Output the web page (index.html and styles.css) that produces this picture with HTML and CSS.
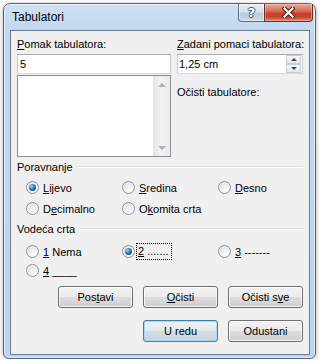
FILE: index.html
```html
<!DOCTYPE html>
<html>
<head>
<meta charset="utf-8">
<link rel="stylesheet" href="styles.css">
</head>
<body>
<div class="window">
  <div class="titlebar">
    <span class="title">Tabulatori</span>
    <div class="caption">
      <div class="cbtn help"><span class="q">?</span></div>
      <div class="cbtn close">
        <svg width="13" height="11" viewBox="0 0 13 11">
          <path d="M2.5 1.5 L10.5 9.5 M10.5 1.5 L2.5 9.5" stroke="#4a1810" stroke-width="4.2" stroke-linecap="square" fill="none"/>
          <path d="M2.5 1.5 L10.5 9.5 M10.5 1.5 L2.5 9.5" stroke="#ffffff" stroke-width="2.2" stroke-linecap="square" fill="none"/>
        </svg>
      </div>
    </div>
  </div>
  <div class="panel">
    <div class="top">
      <div class="col">
        <div class="label"><u>P</u>omak tabulatora:</div>
        <div class="textbox">5</div>
        <div class="listbox">
          <div class="scrollbar">
            <span class="arrow up"></span>
            <span class="arrow down"></span>
          </div>
        </div>
      </div>
      <div class="col">
        <div class="label"><u>Z</u>adani pomaci tabulatora:</div>
        <div class="spin">
          <span class="spin-text">1,25 cm</span>
          <div class="spinbtns">
            <div class="sbtn"><span class="sarrow up"></span></div>
            <div class="sbtn"><span class="sarrow down"></span></div>
          </div>
        </div>
        <div class="label clear">Očisti tabulatore:</div>
      </div>
    </div>

    <div class="group-header g1">Poravnanje</div>
    <div class="radios r1">
      <div class="opt"><span class="radio checked"></span><span><u>L</u>ijevo</span></div>
      <div class="opt"><span class="radio"></span><span><u>S</u>redina</span></div>
      <div class="opt"><span class="radio"></span><span><u>D</u>esno</span></div>
      <div class="opt"><span class="radio"></span><span>D<u>e</u>cimalno</span></div>
      <div class="opt"><span class="radio"></span><span>O<u>k</u>omita crta</span></div>
    </div>

    <div class="group-header g2">Vodeća crta</div>
    <div class="radios r2">
      <div class="opt"><span class="radio"></span><span><u>1</u> Nema</span></div>
      <div class="opt"><span class="radio checked"></span><span class="focus"><u>2</u> .......</span></div>
      <div class="opt"><span class="radio"></span><span><u>3</u> -------</span></div>
      <div class="opt"><span class="radio"></span><span><u>4</u> ____</span></div>
    </div>

    <div class="btnrow row1">
      <div class="btn">Pos<u>t</u>avi</div>
      <div class="btn"><u>O</u>čisti</div>
      <div class="btn">Očisti s<u>v</u>e</div>
    </div>
    <div class="btnrow row2">
      <div class="btn default">U redu</div>
      <div class="btn">Odustani</div>
    </div>
  </div>
</div>
</body>
</html>
```

FILE: styles.css
```css
* { box-sizing: border-box; }

body {
  margin: 0;
  background: #ffffff;
  font-family: "Liberation Sans", Arial, sans-serif;
  font-size: 11px;
  color: #000;
}

u { text-decoration: underline; text-underline-offset: 1px; }

.window {
  margin: 3px 0 0 3px;
  width: 313px;
  height: 356px;
  border: 1px solid #56647a;
  border-radius: 7px 7px 6px 6px;
  background: linear-gradient(180deg, #cfe2f5 0px, #c0d8f0 26px, #bcd5ee 100%);
  padding: 0 5px 3px 6px;
  display: flex;
  flex-direction: column;
  box-shadow: 0 1px 4px rgba(0,0,0,0.35), inset 0 0 0 1px rgba(255,255,255,0.55);
}

.titlebar {
  height: 26px;
  display: flex;
  align-items: flex-start;
  flex: none;
}

.title {
  margin-top: 6px;
  margin-left: 2px;
  font-size: 12px;
  line-height: 14px;
  color: #000;
}

.caption {
  margin-left: auto;
  margin-right: -3px;
  display: flex;
}

.cbtn {
  height: 18px;
  border: 1px solid #5d6b7e;
  border-top: none;
  display: flex;
  align-items: center;
  justify-content: center;
}

.help {
  width: 27px;
  border-radius: 0 0 0 4px;
  background: linear-gradient(180deg, #e6eef7 0%, #d3e0ee 45%, #b9cbe0 55%, #c9d9ea 100%);
  box-shadow: inset 0 0 0 1px rgba(255,255,255,0.5);
}

.q {
  font-family: "DejaVu Sans", sans-serif;
  font-weight: bold;
  font-size: 13px;
  line-height: 14px;
  color: #ffffff;
  text-shadow: 1px 0 0 #4c5560, -1px 0 0 #4c5560, 0 1px 0 #4c5560, 0 -1px 0 #4c5560;
}

.close {
  width: 49px;
  margin-left: -1px;
  border-color: #6b2b22;
  border-radius: 0 0 4px 0;
  background: linear-gradient(180deg, #e9a99c 0%, #d9705d 40%, #c7412f 55%, #c9432f 75%, #e0846c 100%);
  box-shadow: inset 0 0 0 1px rgba(255,210,200,0.45);
}

.panel {
  width: 300px;
  height: 325px;
  background: #f0f0f0;
  border: 1px solid #6d7c90;
  padding: 7px 6px 0 6px;
  flex: none;
}

.top {
  display: grid;
  grid-template-columns: 154px 126px;
  column-gap: 6px;
}

.label {
  height: 13px;
  line-height: 13px;
  white-space: nowrap;
}

.textbox {
  margin-top: 3px;
  height: 20px;
  border: 1px solid;
  border-color: #abadb3 #c9ccd2 #d6dae0 #c9ccd2;
  background: #fff;
  padding-left: 2px;
  line-height: 18px;
}

.listbox {
  margin-top: 1px;
  height: 82px;
  border: 1px solid #8a8f97;
  background: #fff;
  display: flex;
  justify-content: flex-end;
}

.scrollbar {
  width: 17px;
  height: 100%;
  background: linear-gradient(90deg, #e6e6e6 0%, #f1f1f1 40%, #ececec 100%);
  border-left: 1px solid #e4e4e4;
  display: flex;
  flex-direction: column;
  justify-content: space-between;
  align-items: center;
  padding: 7px 0 6px 0;
}

.arrow {
  width: 0;
  height: 0;
  border-left: 4px solid transparent;
  border-right: 4px solid transparent;
}
.arrow.up { border-bottom: 4px solid #b0b0b0; }
.arrow.down { border-top: 4px solid #b0b0b0; }

.spin {
  margin-top: 3px;
  height: 20px;
  border: 1px solid;
  border-color: #abadb3 #c9ccd2 #d6dae0 #c9ccd2;
  background: #fff;
  display: flex;
}

.spin-text {
  flex: 1;
  padding-left: 1px;
  line-height: 18px;
}

.spinbtns {
  width: 15px;
  margin: 0 1px 0 0;
  display: flex;
  flex-direction: column;
}

.sbtn {
  height: 9px;
  border: 1px solid #c6ccd4;
  background: linear-gradient(180deg, #f6f7f9 0%, #e5e8ec 100%);
  display: flex;
  align-items: center;
  justify-content: center;
}

.sarrow {
  width: 0;
  height: 0;
  border-left: 3px solid transparent;
  border-right: 3px solid transparent;
}
.sarrow.up { border-bottom: 3px solid #444; }
.sarrow.down { border-top: 3px solid #444; }

.label.clear { margin-top: 12px; }

.group-header {
  display: flex;
  align-items: center;
  gap: 5px;
  height: 13px;
  line-height: 13px;
  white-space: nowrap;
}
.group-header::after {
  content: "";
  flex: 1;
  height: 1px;
  margin-top: -2px;
  background: #d5dde3;
  box-shadow: 0 1px 0 #ffffff;
}
.g1 { margin-top: 4px; }
.g2 { margin-top: 4px; }

.radios {
  display: grid;
  grid-template-columns: 96px 96px 94px;
  padding-left: 9px;
}
.r1 { margin-top: 3px; grid-auto-rows: 21px; }
.r2 { margin-top: 6px; grid-auto-rows: 19px; }

.opt {
  display: flex;
  align-items: center;
  gap: 4px;
  white-space: nowrap;
}

.radio {
  width: 13px;
  height: 13px;
  flex: none;
  border-radius: 50%;
  border: 1px solid #8e9094;
  background: radial-gradient(circle at 65% 70%, #fdfdfd 0%, #f0f0f0 40%, #d2d2d2 100%);
  box-shadow: inset 0 0 0 1px rgba(255,255,255,0.6);
  display: flex;
  align-items: center;
  justify-content: center;
}

.radio.checked::after {
  content: "";
  width: 7px;
  height: 7px;
  border-radius: 50%;
  background: radial-gradient(circle at 35% 35%, #8fe0ff 0%, #3a8fc8 35%, #0f4f87 75%, #0c3f6e 100%);
}

.focus {
  outline: 1px dotted #000;
  outline-offset: 0;
  padding: 1px 2px 1px 1px;
  margin-left: -2px;
  line-height: 13px;
}

.btnrow {
  display: flex;
  justify-content: flex-end;
  gap: 10px;
}
.row1 { margin-top: 6px; }
.row2 { margin-top: 12px; }

.btn {
  width: 75px;
  height: 22px;
  border: 1px solid #707070;
  border-radius: 3px;
  background: linear-gradient(180deg, #f2f2f2 0%, #ebebeb 48%, #dddddd 52%, #cfcfcf 100%);
  box-shadow: inset 0 0 0 1px rgba(255,255,255,0.7);
  text-align: center;
  line-height: 20px;
  white-space: nowrap;
}

.btn.default {
  border-color: #3c7fb1;
  background: linear-gradient(180deg, #eef3f7 0%, #e3eaef 48%, #d3dde5 52%, #c8d4de 100%);
  box-shadow: inset 0 0 0 1px #a9d8f4;
}
```
